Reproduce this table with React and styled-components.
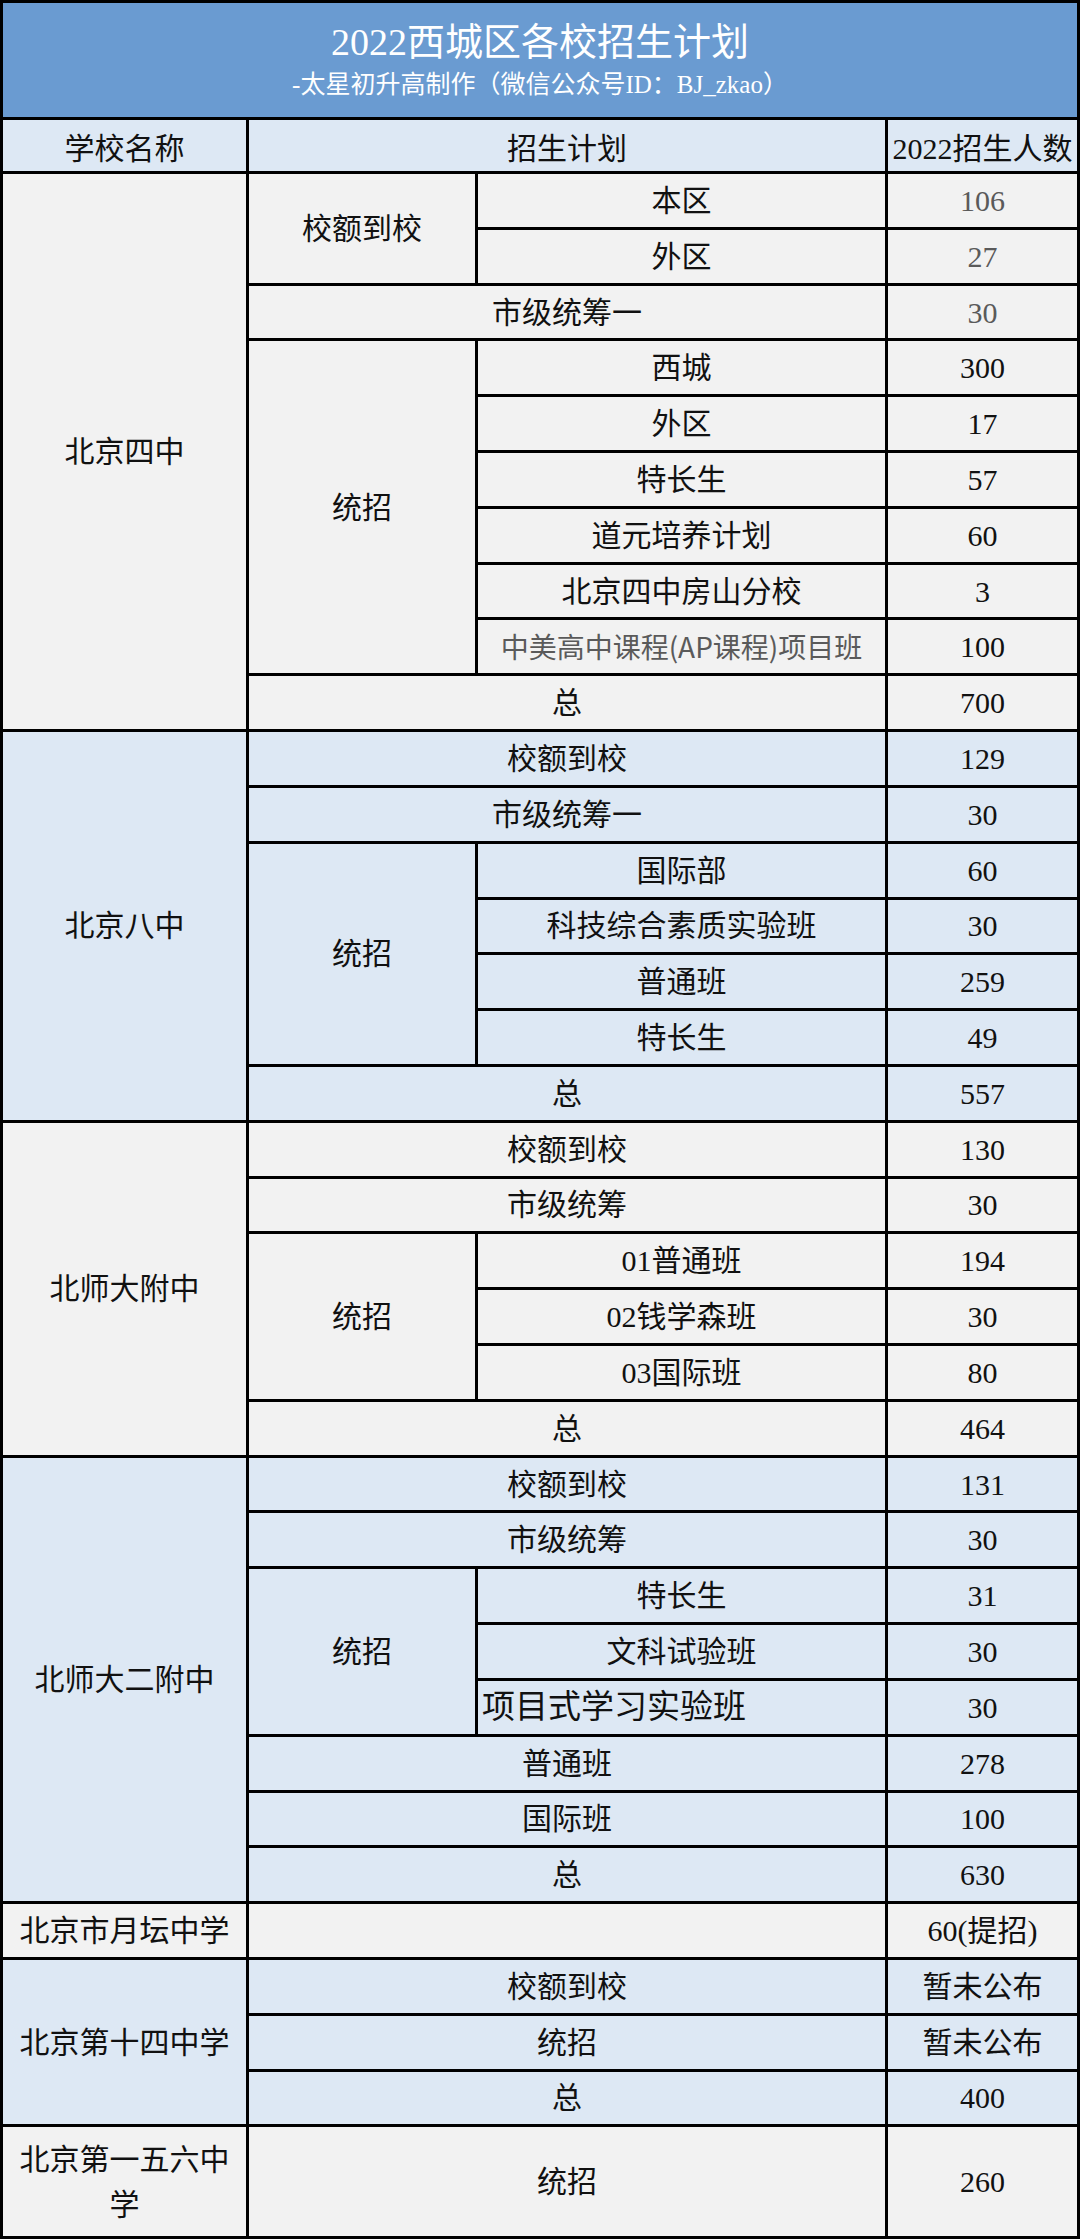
import React from 'react';
import styled, { createGlobalStyle } from 'styled-components';

const GlobalStyle = createGlobalStyle`
  html, body {
    margin: 0;
    padding: 0;
    background: #ffffff;
  }
`;

const TONES = {
  gray: '#f2f2f2',
  blue: '#dde8f4',
};

const Sheet = styled.div`
  box-sizing: border-box;
  width: 1080px;
  height: 2239px;
  padding: 3px;
  background: #000;
  display: grid;
  grid-template-columns: 243px 226px 407px 189px;
  grid-template-rows: 114px 51px repeat(37, 1fr);
  gap: 3px;
  font-family: 'Liberation Serif', 'Noto Sans CJK SC', serif;
`;

const Banner = styled.div`
  grid-column: 1 / -1;
  background: #6a9bd1;
  color: #fff;
  display: flex;
  flex-direction: column;
  align-items: center;
  justify-content: center;
  gap: 6px;
`;

const Title = styled.div`
  font-size: 38px;
  line-height: 44px;
`;

const Subtitle = styled.div`
  font-size: 25px;
  line-height: 30px;
`;

const HeadCell = styled.div`
  grid-column: span ${(p) => p.$cols || 1};
  background: ${TONES.blue};
  color: #111;
  font-size: 30px;
  display: flex;
  align-items: center;
  justify-content: center;
  white-space: nowrap;
`;

const Cell = styled.div`
  grid-row: span ${(p) => p.$rows || 1};
  grid-column: span ${(p) => p.$cols || 1};
  background: ${(p) => TONES[p.$tone]};
  color: ${(p) => (p.$muted ? '#5a5a5a' : '#111')};
  font-family: ${(p) =>
    p.$sans ? "'Noto Sans CJK SC', sans-serif" : "'Liberation Serif', 'Noto Sans CJK SC', serif"};
  font-size: ${(p) => (p.$sans ? '28px' : p.$big ? '33px' : '30px')};
  line-height: 45px;
  display: flex;
  align-items: center;
  justify-content: ${(p) => (p.$left ? 'flex-start' : 'center')};
  text-align: center;
  padding: 0 ${(p) => (p.$left ? '4px' : '12px')};
  white-space: ${(p) => (p.$wrap ? 'normal' : 'nowrap')};
`;

// each cell: [text, rows, cols, extra]
const groups = [
  {
    tone: 'gray',
    rows: [
      [['北京四中', 10], ['校额到校', 2], ['本区'], ['106', 1, 1, { muted: true }]],
      [['外区'], ['27', 1, 1, { muted: true }]],
      [['市级统筹一', 1, 2], ['30', 1, 1, { muted: true }]],
      [['统招', 6], ['西城'], ['300']],
      [['外区'], ['17']],
      [['特长生'], ['57']],
      [['道元培养计划'], ['60']],
      [['北京四中房山分校'], ['3']],
      [['中美高中课程(AP课程)项目班', 1, 1, { muted: true, sans: true }], ['100']],
      [['总', 1, 2], ['700']],
    ],
  },
  {
    tone: 'blue',
    rows: [
      [['北京八中', 7], ['校额到校', 1, 2], ['129']],
      [['市级统筹一', 1, 2], ['30']],
      [['统招', 4], ['国际部'], ['60']],
      [['科技综合素质实验班'], ['30']],
      [['普通班'], ['259']],
      [['特长生'], ['49']],
      [['总', 1, 2], ['557']],
    ],
  },
  {
    tone: 'gray',
    rows: [
      [['北师大附中', 6], ['校额到校', 1, 2], ['130']],
      [['市级统筹', 1, 2], ['30']],
      [['统招', 3], ['01普通班'], ['194']],
      [['02钱学森班'], ['30']],
      [['03国际班'], ['80']],
      [['总', 1, 2], ['464']],
    ],
  },
  {
    tone: 'blue',
    rows: [
      [['北师大二附中', 8], ['校额到校', 1, 2], ['131']],
      [['市级统筹', 1, 2], ['30']],
      [['统招', 3], ['特长生'], ['31']],
      [['文科试验班'], ['30']],
      [['项目式学习实验班', 1, 1, { big: true, left: true }], ['30']],
      [['普通班', 1, 2], ['278']],
      [['国际班', 1, 2], ['100']],
      [['总', 1, 2], ['630']],
    ],
  },
  {
    tone: 'gray',
    rows: [[['北京市月坛中学'], ['', 1, 2], ['60(提招)']]],
  },
  {
    tone: 'blue',
    rows: [
      [['北京第十四中学', 3], ['校额到校', 1, 2], ['暂未公布']],
      [['统招', 1, 2], ['暂未公布']],
      [['总', 1, 2], ['400']],
    ],
  },
  {
    tone: 'gray',
    rows: [[['北京第一五六中学', 2, 1, { wrap: true }], ['统招', 2, 2], ['260', 2]]],
  },
];

export default function App() {
  return (
    <>
      <GlobalStyle />
      <Sheet>
        <Banner>
          <Title>2022西城区各校招生计划</Title>
          <Subtitle>-太星初升高制作（微信公众号ID：BJ_zkao）</Subtitle>
        </Banner>
        <HeadCell>学校名称</HeadCell>
        <HeadCell $cols={2}>招生计划</HeadCell>
        <HeadCell>2022招生人数</HeadCell>
        {groups.map((g, gi) =>
          g.rows.map((row, ri) =>
            row.map(([text, rows, cols, extra = {}], ci) => (
              <Cell
                key={`${gi}-${ri}-${ci}`}
                $tone={g.tone}
                $rows={rows}
                $cols={cols}
                $muted={extra.muted}
                $sans={extra.sans}
                $wrap={extra.wrap}
                $big={extra.big}
                $left={extra.left}
              >
                {text}
              </Cell>
            ))
          )
        )}
      </Sheet>
    </>
  );
}
